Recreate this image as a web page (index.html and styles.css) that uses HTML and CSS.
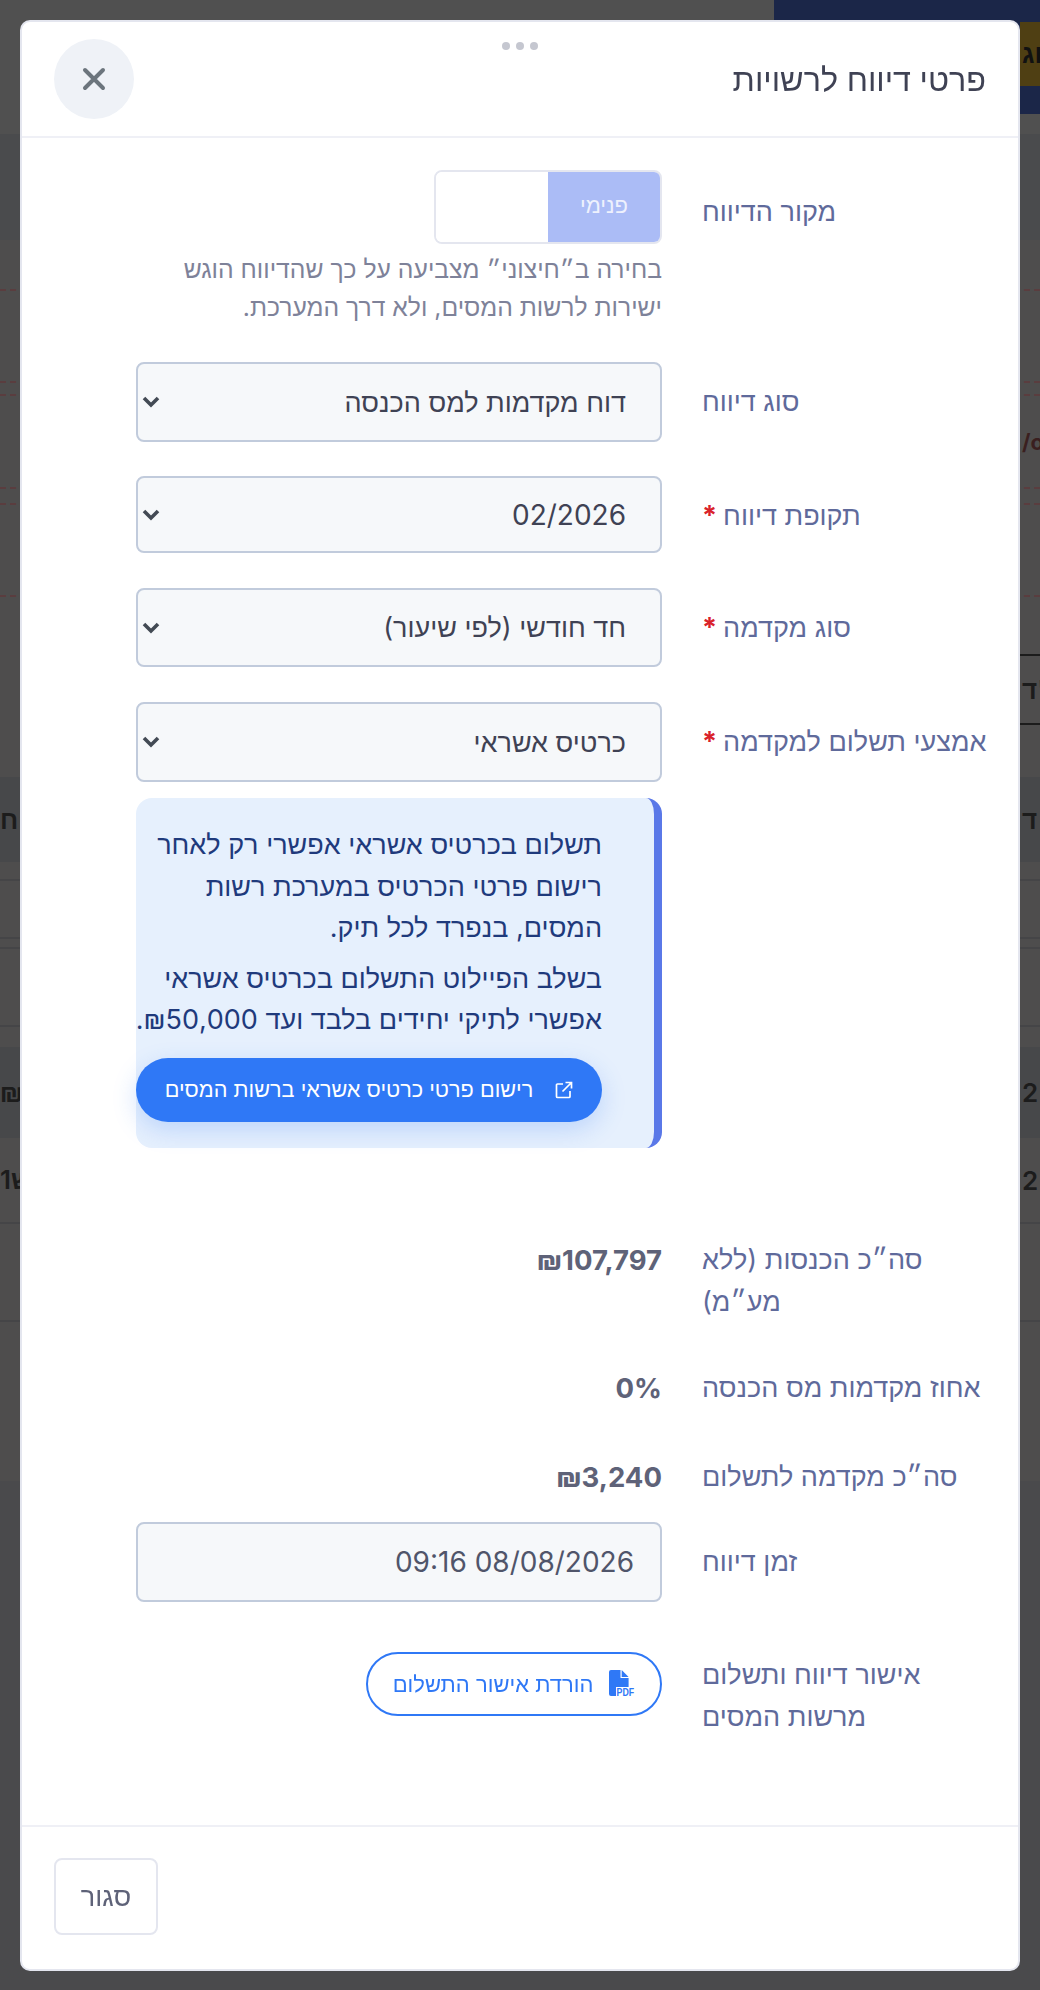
FILE: index.html
```html
<!DOCTYPE html>
<html lang="he">
<head>
<meta charset="utf-8">
<title>פרטי דיווח לרשויות</title>
<link rel="stylesheet" href="styles.css">
</head>
<body>
<div class="page" dir="ltr">
  <div class="band band-top"><div class="navy"><div class="warn"><span class="frag frag-dark">זוג</span></div></div></div>
  <div class="band band-a h20"></div>
  <div class="band band-b h106"></div>
  <div class="band band-c h51 dash"></div>
  <div class="band band-c h92 dash"></div>
  <div class="band band-c h13 dash"></div>
  <div class="band band-c h93 dash edge"><span class="frag frag-red">/o</span></div>
  <div class="band band-c h16 dash"></div>
  <div class="band band-c h92 dash"></div>
  <div class="band band-c h57 edge"></div>
  <div class="band band-c h71 edge"><span class="tab"><span class="frag">ד'</span></span></div>
  <div class="band band-c h52"></div>
  <div class="band band-d h85 split"><span class="frag frag-left">ח:</span><span class="frag">ד</span></div>
  <div class="band band-c h19 line"></div>
  <div class="band band-c h58 line"></div>
  <div class="band band-c h10 line"></div>
  <div class="band band-c h12"></div>
  <div class="band band-c h66 line"></div>
  <div class="band band-c h20"></div>
  <div class="band band-d h91 split"><span class="frag frag-left">₪.</span><span class="frag">2</span></div>
  <div class="band band-c h86 split line"><span class="frag frag-left">ש1</span><span class="frag">2</span></div>
  <div class="band band-c h98 line"></div>
  <div class="band band-c h159"></div>
  <div class="band band-e h518"></div>
</div>

<section class="modal" dir="rtl">
  <header class="modal-head">
    <h1 class="modal-title">פרטי דיווח לרשויות</h1>
    <span class="grip"><i></i><i></i><i></i></span>
    <button class="close" type="button" aria-label="סגור">
      <svg viewBox="0 0 24 24" width="24" height="24"><path d="M3 3 21 21M21 3 3 21" fill="none" stroke="#6c757d" stroke-width="4" stroke-linecap="round"/></svg>
    </button>
  </header>

  <div class="modal-body">
    <div class="row gap-36">
      <div class="label pad-21">מקור הדיווח</div>
      <div class="control">
        <div class="toggle"><span class="toggle-on">פנימי</span><span class="toggle-off"></span></div>
        <p class="help">בחירה ב״חיצוני״ מצביעה על כך שהדיווח הוגש ישירות לרשות המסים, ולא דרך המערכת.</p>
      </div>
    </div>

    <div class="row gap-34">
      <div class="label pad-19">סוג דיווח</div>
      <div class="control"><div class="select"><span>דוח מקדמות למס הכנסה</span>
        <svg class="chev" viewBox="0 0 18 12" width="18" height="12"><path d="M2 2 9 9 16 2" fill="none" stroke="#434a54" stroke-width="3.6"/></svg></div></div>
    </div>

    <div class="row gap-35">
      <div class="label pad-19">תקופת דיווח<b class="req">*</b></div>
      <div class="control"><div class="select select-77"><span class="latin">02/2026</span>
        <svg class="chev" viewBox="0 0 18 12" width="18" height="12"><path d="M2 2 9 9 16 2" fill="none" stroke="#434a54" stroke-width="3.6"/></svg></div></div>
    </div>

    <div class="row gap-35">
      <div class="label pad-19">סוג מקדמה<b class="req">*</b></div>
      <div class="control"><div class="select select-79"><span>חד חודשי (לפי שיעור)</span>
        <svg class="chev" viewBox="0 0 18 12" width="18" height="12"><path d="M2 2 9 9 16 2" fill="none" stroke="#434a54" stroke-width="3.6"/></svg></div></div>
    </div>

    <div class="row gap-91">
      <div class="label pad-19">אמצעי תשלום למקדמה<b class="req">*</b></div>
      <div class="control">
        <div class="select"><span>כרטיס אשראי</span>
          <svg class="chev" viewBox="0 0 18 12" width="18" height="12"><path d="M2 2 9 9 16 2" fill="none" stroke="#434a54" stroke-width="3.6"/></svg></div>
        <div class="notice">
          <p>תשלום בכרטיס אשראי אפשרי רק לאחר רישום פרטי הכרטיס במערכת רשות המסים, בנפרד לכל תיק.</p>
          <p class="notice-wide">בשלב הפיילוט התשלום בכרטיס אשראי אפשרי לתיקי יחידים בלבד ועד ₪50,000.</p>
          <a class="notice-btn" href="#">
            <svg viewBox="0 0 18 18" width="18" height="18"><path d="M8 3H2.500A1 1 0 0 0 1.500 4V15.500A1 1 0 0 0 2.500 16.500H14A1 1 0 0 0 15 15.500V10M10.500 1.500H16.500V7.500M16.500 1.500 7.500 10.500" fill="none" stroke="#fff" stroke-width="1.700"/></svg>
            <span>רישום פרטי כרטיס אשראי ברשות המסים</span>
          </a>
        </div>
      </div>
    </div>

    <div class="row gap-44">
      <div class="label">סה״כ הכנסות (ללא מע״מ)</div>
      <div class="control value">₪107,797</div>
    </div>
    <div class="row gap-47">
      <div class="label">אחוז מקדמות מס הכנסה</div>
      <div class="control value">0%</div>
    </div>
    <div class="row gap-24">
      <div class="label">סה״כ מקדמה לתשלום</div>
      <div class="control value">₪3,240</div>
    </div>
    <div class="row gap-50">
      <div class="label pad-19">זמן דיווח</div>
      <div class="control"><div class="stamp"><span class="latin" dir="ltr">09:16 08/08/2026</span></div></div>
    </div>
    <div class="row">
      <div class="label pad-2">אישור דיווח ותשלום מרשות המסים</div>
      <div class="control">
        <a class="pdf-btn" href="#">
          <svg class="pdf-icon" viewBox="0 0 26 28" width="26" height="28"><path d="M2 0H11.500V8H19.600V24A2 2 0 0 1 17.600 26H2A2 2 0 0 1 0 24V2A2 2 0 0 1 2 0Z" fill="#2f78f6"/><path d="M12.700 0 19.600 7H12.700Z" fill="#2f78f6"/><rect x="7" y="17" width="19" height="11" fill="#fff"/><text x="7.600" y="25.500" class="pdf-text" textLength="17.500" lengthAdjust="spacingAndGlyphs">PDF</text></svg>
          <span>הורדת אישור התשלום</span>
        </a>
      </div>
    </div>
  </div>

  <footer class="modal-foot">
    <button class="foot-btn" type="button">סגור</button>
  </footer>
</section>
</body>
</html>
```
FILE: styles.css
```css
* { box-sizing: border-box; }
html, body { margin: 0; height: 100%; overflow: hidden; background: #4a4a4c; }
body { font-family: Inter, "Liberation Sans", sans-serif; font-size: 27px; }

/* dimmed page behind the dialog */
.page { display: flex; flex-direction: column; height: 1990px; width: 1040px; }
.band { flex: none; display: flex; justify-content: flex-end; align-items: center; font-weight: 600; color: #1c1c1c; font-size: 26px; }
.band-top { height: 114px; background: #505050; align-items: flex-start; }
.band-a { background: #505050; }
.band-b { background: #4a4b4d; }
.band-c { background: #4e4d4d; }
.band-d { background: #47484a; }
.band-e { background: #4a4a4c; }
.h10 { height: 10px; } .h12 { height: 12px; } .h13 { height: 13px; } .h16 { height: 16px; }
.h19 { height: 19px; } .h20 { height: 20px; } .h51 { height: 51px; } .h52 { height: 52px; }
.h57 { height: 57px; } .h58 { height: 58px; } .h66 { height: 66px; } .h71 { height: 71px; }
.h85 { height: 85px; } .h86 { height: 86px; } .h91 { height: 91px; } .h92 { height: 92px; }
.h93 { height: 93px; } .h98 { height: 98px; } .h106 { height: 106px; } .h159 { height: 159px; }
.h518 { height: 518px; }
.dash { border-bottom: 2px dashed #5a3d3f; }
.line { border-bottom: 2px solid #454547; }
.split { justify-content: space-between; }
.navy { width: 266px; height: 114px; background: #1b2648; padding-top: 22px; display: flex; justify-content: flex-end; }
.warn { width: 20px; height: 64px; background: #4f3f13; display: flex; align-items: center; }
.frag { display: block; width: 20px; overflow: hidden; white-space: nowrap; padding-left: 2px; }
.frag-left { text-align: right; padding: 0; }
.frag-dark { color: #111; }
.frag-red { color: #3a1f1f; font-weight: 700; font-size: 22px; }
.tab { width: 20px; height: 100%; display: flex; align-items: center; border-top: 2px solid #1c1c1c; border-bottom: 2px solid #1c1c1c; }

/* dialog */
.modal { position: fixed; left: 20px; top: 20px; width: 1000px; height: 1951px; background: #fff; border: 2px solid #e4e6ef; border-radius: 10px; display: flex; flex-direction: column; }
.modal-head { position: relative; flex: none; height: 116px; display: flex; align-items: center; justify-content: space-between; padding: 0 32px; border-bottom: 2px solid #eff0f6; }
.modal-title { margin: 0; font-size: 32.300px; font-weight: 500; color: #3f4254; }
.grip { position: absolute; left: 480px; top: 20px; display: flex; gap: 6px; }
.grip i { display: block; width: 8px; height: 8px; border-radius: 50%; background: #c5c7d0; }
.close { width: 80px; height: 80px; border: 0; border-radius: 50%; background: #eff2f7; display: flex; align-items: center; justify-content: center; padding: 0; }

.modal-body { flex: 1; padding: 32px 26px 0 114px; }
.row { display: grid; grid-template-columns: 302px 526px; column-gap: 28px; }
.gap-24 { margin-bottom: 24px; } .gap-34 { margin-bottom: 34px; } .gap-35 { margin-bottom: 35px; } .gap-36 { margin-bottom: 36px; }
.gap-44 { margin-bottom: 44px; } .gap-47 { margin-bottom: 47px; } .gap-50 { margin-bottom: 50px; } .gap-91 { margin-bottom: 91px; }
.label { color: #5f6a9b; line-height: 42px; text-align: left; padding-left: 12px; }
.pad-2 { padding-top: 2px; } .pad-19 { padding-top: 19px; } .pad-21 { padding-top: 21px; }
.req { color: #d9222a; font-weight: 700; margin-right: 6px; }
.control { min-width: 0; }
.latin { font-size: 28px; }

.toggle { display: flex; width: 228px; height: 74px; border: 2px solid #e4e6ef; border-radius: 8px; overflow: hidden; }
.toggle-on { flex: 1; display: flex; align-items: center; justify-content: center; background: #abbcf6; color: #eef1fd; font-size: 22px; padding-bottom: 4px; }
.toggle-off { flex: 1; background: #fff; }
.help { margin: 6px 0 0; color: #7e8299; font-size: 24.700px; line-height: 38px; }

.select, .stamp { height: 80px; display: flex; align-items: center; justify-content: space-between; background: #f6f8fa; border: 2px solid #c1cbdc; border-radius: 8px; color: #3f4254; }
.select { padding: 0 34px 0 4px; }
.select-77 { height: 77px; }
.select-79 { height: 79px; }
.chev { flex: none; }
.stamp { padding: 0 26px; color: #50556a; }

.notice { margin-top: 16px; height: 350px; padding: 26px 52px 0 0; background: #e6f0fd; border-right: 8px solid #5a78e8; border-radius: 16px; color: #1f3a7c; }
.notice p { margin: 0 0 9px; line-height: 41.600px; }
.notice .notice-wide { margin-left: -8px; margin-bottom: 17px; }
.notice-btn { display: inline-flex; width: 466px; height: 64px; align-items: center; justify-content: center; gap: 22px; border-radius: 32px; background: #2f78f6; color: #fff; font-size: 21.700px; text-decoration: none; box-shadow: 0 8px 24px rgba(47, 120, 246, .22); }

.value { color: #5e6278; font-weight: 700; font-size: 27.500px; line-height: 42px; text-align: right; }

.pdf-btn { display: inline-flex; width: 296px; height: 64px; align-items: center; justify-content: center; gap: 16px; border: 2px solid #2f78f6; border-radius: 32px; color: #2f78f6; font-size: 22px; text-decoration: none; }
.pdf-icon { flex: none; }
.pdf-text { font-family: "Liberation Sans Narrow", "Liberation Sans", sans-serif; font-size: 10.500px; font-weight: 700; fill: #2f78f6; direction: ltr; }

.modal-foot { flex: none; height: 144px; border-top: 2px solid #eff0f6; padding: 31px 32px 0; display: flex; justify-content: flex-end; align-items: flex-start; }
.foot-btn { width: 104px; height: 77px; background: #fff; border: 2px solid #e4e6ef; border-radius: 8px; color: #5e6278; font: inherit; padding: 0; }
```
